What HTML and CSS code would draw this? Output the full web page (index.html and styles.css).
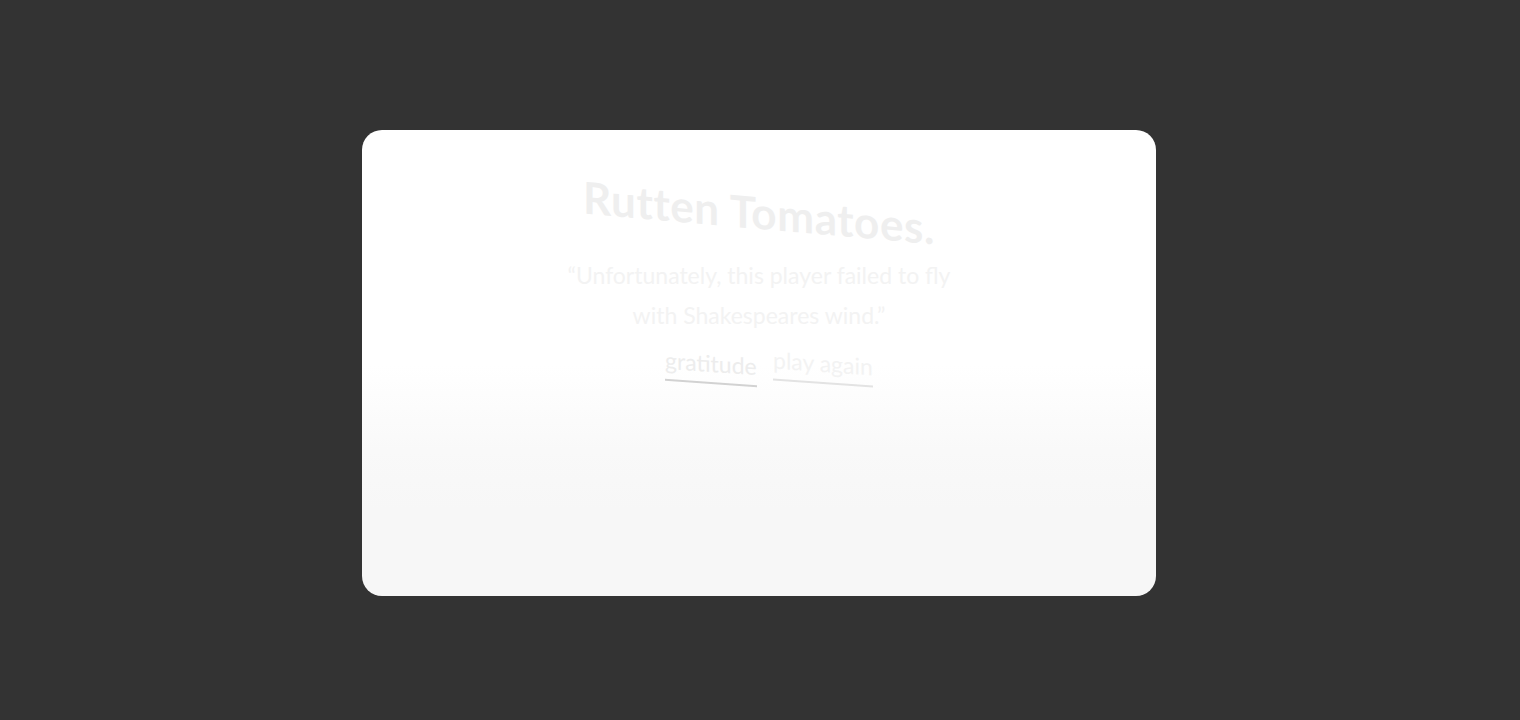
FILE: index.html
```html
<!DOCTYPE html>
<html>
<head>
<meta charset="utf-8">
<link rel="stylesheet" href="styles.css">
</head>
<body>
<div class="stage">
  <div class="card">
    <h1 class="title">Rutten Tomatoes.</h1>
    <p class="quote">“Unfortunately, this player failed to fly<br>with Shakespeares wind.”</p>
    <div class="links">
      <a class="link link-grat">gratitude</a>
      <a class="link link-play">play again</a>
    </div>
  </div>
</div>
</body>
</html>
```
FILE: styles.css
```css
html, body {
  margin: 0;
  padding: 0;
  background: #333333;
}
.stage {
  width: 1520px;
  height: 720px;
  display: flex;
  justify-content: center;
  align-items: flex-start;
  padding-top: 130px;
  box-sizing: border-box;
}
.card {
  width: 794px;
  height: 466px;
  border-radius: 20px;
  background: linear-gradient(to bottom, #ffffff 0px, #ffffff 235px, #f9f9f9 320px, #f7f7f7 380px, #f7f7f7 100%);
  display: flex;
  flex-direction: column;
  align-items: center;
  font-family: Lato, "Noto Sans", sans-serif;
  margin-left: -2px;
}
.title {
  margin: 52px 0 0 0;
  font-size: 44px;
  font-weight: 700;
  color: #efefef;
  transform: skewY(5deg);
  letter-spacing: 0.6px;
  line-height: 60px;
}
.quote {
  margin: 13px 0 0 0;
  font-size: 23px;
  line-height: 40px;
  text-align: center;
  color: #f3f3f3;
}
.links {
  display: flex;
  gap: 17px;
  margin-top: 13px;
  margin-left: 20px;
}
.link {
  font-size: 23px;
  line-height: 30px;
  padding: 0 0 4px 0;
  transform: skewY(4deg);
  border-bottom: 2px solid #d2d2d2;
}
.link-grat {
  color: #ededed;
}
.link-play {
  color: #f3f3f3;
  border-bottom-color: #e3e3e3;
}
```
